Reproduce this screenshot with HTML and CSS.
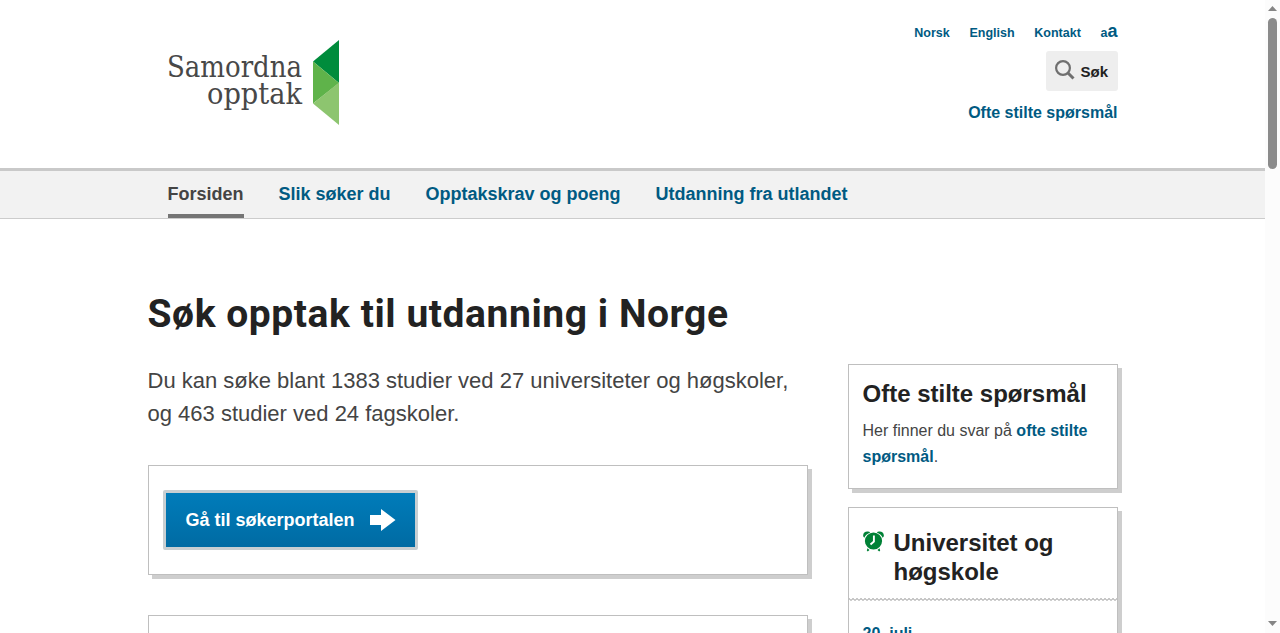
FILE: index.html
```html
<!DOCTYPE html>
<html lang="no">
<head>
    <meta charset="UTF-8">
    <meta name="viewport" content="width=device-width, initial-scale=1.0">
    <title>Samordna opptak</title>
    <link rel="stylesheet" href="styles.css">
</head>
<body>
    <div class="page">
        <!-- Header -->
        <header class="header">
            <div class="wrap header-inner">
                <a class="logo" href="#">
                    <svg width="174" height="88" viewBox="0 0 174 88">
                        <g class="logo-text">
                            <text x="-1" y="39" textLength="135" lengthAdjust="spacingAndGlyphs">Samordna</text>
                            <text x="39" y="66" textLength="95" lengthAdjust="spacingAndGlyphs">opptak</text>
                        </g>
                        <path d="M171 2v43L145 23.500z" fill="#008c3c"/>
                        <path d="M145 23.500L171 45 145 65.500z" fill="#5fb34a"/>
                        <path d="M171 44.500V87L145 65.500z" fill="#8dc56f"/>
                    </svg>
                </a>
                <div class="tools">
                    <div class="tool-links">
                        <a href="#">Norsk</a>
                        <a href="#">English</a>
                        <a href="#">Kontakt</a>
                        <a href="#">a<span class="big-a">a</span></a>
                    </div>
                    <button class="search">
                        <svg width="20" height="20" viewBox="0 0 20 20" fill="none" stroke="#6f6f6f">
                            <circle cx="8" cy="8" r="6.900" stroke-width="2.200"/>
                            <path d="M12.500 12.500l6 6" stroke-width="3"/>
                        </svg>
                        Søk
                    </button>
                    <a class="faq-link" href="#">Ofte stilte spørsmål</a>
                </div>
            </div>
        </header>

        <!-- Main menu -->
        <nav class="nav">
            <div class="wrap nav-inner">
                <a class="active" href="#">Forsiden</a>
                <a href="#">Slik søker du</a>
                <a href="#">Opptakskrav og poeng</a>
                <a href="#">Utdanning fra utlandet</a>
            </div>
        </nav>

        <!-- Content -->
        <main class="wrap">
            <h1>Søk opptak til utdanning i Norge</h1>
            <div class="columns">
                <div class="main-column">
                    <p class="intro">Du kan søke blant 1383 studier ved 27 universiteter og høgskoler, og 463 studier ved 24 fagskoler.</p>
                    <div class="box portal">
                        <a class="button" href="#">
                            Gå til søkerportalen
                            <svg width="26" height="22" viewBox="0 0 26 22" fill="#fff">
                                <path d="M0 6h11V0l14.500 11L11 22v-6H0z"/>
                            </svg>
                        </a>
                    </div>
                    <div class="box next-box"></div>
                </div>
                <aside class="side-column">
                    <div class="box faq">
                        <h2>Ofte stilte spørsmål</h2>
                        <p>Her finner du svar på <a href="#">ofte stilte spørsmål</a>.</p>
                    </div>
                    <div class="box dates">
                        <div class="dates-title">
                            <svg width="21" height="21" viewBox="0 0 21 21">
                                <g fill="#008136">
                                    <path d="M0.300 5.500C-.5 2.500 2 .2 5 .6c1 .1 1.700.5 2.200.9C4.500 2.500 2.400 4.300 1.300 6.700z"/>
                                    <path d="M20.700 5.500C21.500 2.500 19 .2 16 .6c-1 .1-1.700.5-2.200.9 2.700 1 4.800 2.800 5.900 5.200z"/>
                                    <circle cx="10.500" cy="10" r="8.600"/>
                                    <path d="M4.500 17.300l2 1.700-1.700 1.500-1-1zM16.500 17.300l-2 1.700 1.700 1.500 1-1z"/>
                                </g>
                                <path d="M10.900 4.500v6l-3.400 3" fill="none" stroke="#fff" stroke-width="1.900"/>
                            </svg>
                            <h2>Universitet og høgskole</h2>
                        </div>
                        <svg class="zigzag" width="268" height="3">
                            <defs>
                                <pattern id="zigzag" width="4" height="3" patternUnits="userSpaceOnUse">
                                    <path d="M-1 -.5l3 3 3-3" fill="none" stroke="#909090" stroke-width="1"/>
                                </pattern>
                            </defs>
                            <rect width="268" height="3" fill="url(#zigzag)"/>
                        </svg>
                        <a class="date" href="#">20. juli</a>
                    </div>
                </aside>
            </div>
        </main>
    </div>

    <!-- Scrollbar -->
    <div class="scrollbar">
        <svg width="9" height="5" viewBox="0 0 9 5"><path d="M0 5L4.500 0 9 5z" fill="#858585"/></svg>
        <div class="thumb"></div>
        <svg class="down" width="9" height="5" viewBox="0 0 9 5"><path d="M0 0h9L4.500 5z" fill="#858585"/></svg>
    </div>
</body>
</html>
```
FILE: styles.css
```css
* {
    box-sizing: border-box;
    margin: 0;
    padding: 0;
}
body {
    display: flex;
    height: 100vh;
    overflow: hidden;
    background-color: #fff;
    color: #444;
    font-family: "Liberation Sans", Arial, sans-serif;
    font-size: 16px;
}
a {
    color: #005a82;
    font-weight: bold;
    text-decoration: none;
}
.page {
    flex: 1;
    overflow: hidden;
}
.wrap {
    width: 970px;
    margin: 0 auto;
}
.header {
    height: 168px;
}
.header-inner {
    display: flex;
    justify-content: space-between;
    padding-left: 20px;
}
.logo {
    padding-top: 38px;
}
.logo svg {
    display: block;
}
.logo-text {
    fill: #484848;
    font-family: "DejaVu Serif Condensed", "DejaVu Serif", serif;
    font-size: 29px;
    font-weight: normal;
}
.tools {
    display: flex;
    flex-direction: column;
    align-items: flex-end;
    padding-top: 21px;
}
.tool-links {
    display: flex;
    align-items: baseline;
    gap: 19.7px;
    height: 30px;
    font-size: 12.5px;
    line-height: 20px;
}
.big-a {
    font-size: 18px;
}
.search {
    display: flex;
    align-items: center;
    gap: 6px;
    width: 72px;
    height: 40px;
    padding-left: 9px;
    border: none;
    border-radius: 3px;
    background-color: #eee;
    color: #222;
    font-family: inherit;
    font-size: 15px;
    font-weight: bold;
}
.search svg {
    margin-top: -2px;
}
.faq-link {
    margin-top: 12px;
    line-height: 20px;
}
.nav {
    height: 51px;
    border-top: 3px solid #c9c9c9;
    border-bottom: 1px solid #ccc;
    background-color: #f2f2f2;
}
.nav-inner {
    display: flex;
    gap: 35px;
    padding-left: 20px;
    font-size: 18px;
    line-height: 46px;
}
.nav-inner a {
    height: 47px;
}
.nav-inner .active {
    border-bottom: 4px solid #757575;
    color: #444;
}
h1 {
    padding-top: 70px;
    color: #222;
    font-family: Roboto, sans-serif;
    font-size: 39px;
    font-weight: bold;
    letter-spacing: 0.56px;
    line-height: 50px;
    white-space: nowrap;
}
h2 {
    color: #222;
    font-size: 24px;
    line-height: 29px;
}
.columns {
    display: flex;
    justify-content: space-between;
    padding-top: 25px;
}
.main-column {
    width: 660px;
}
.side-column {
    width: 270px;
}
.intro {
    height: 101px;
    font-size: 22px;
    line-height: 33px;
}
.box {
    border: 1px solid #bfbfbf;
    background-color: #fff;
    box-shadow: 4px 4px 0 #cecece;
}
.portal {
    height: 110px;
    padding: 24px 14px;
}
.button {
    display: flex;
    align-items: center;
    justify-content: space-between;
    width: 255px;
    height: 60px;
    padding: 0 19px 0 20px;
    border: 3px solid #c8cfd2;
    border-radius: 2px;
    background: linear-gradient(#007cba, #006ba3);
    color: #fff;
    font-size: 18px;
}
.next-box {
    height: 110px;
    margin-top: 40px;
}
.faq {
    height: 125px;
    padding: 14px;
}
.faq p {
    padding-top: 10px;
    line-height: 26px;
}
.dates {
    height: 220px;
    margin-top: 18px;
}
.dates-title {
    display: flex;
    gap: 10px;
    padding: 20px 14px 12px;
}
.dates-title svg {
    flex: none;
    margin-top: 3px;
}
.zigzag {
    display: block;
}
.date {
    display: block;
    padding: 21px 14px;
    line-height: 24px;
}
.scrollbar {
    display: flex;
    flex-direction: column;
    align-items: center;
    width: 15px;
    padding: 6px 0 7px;
    background-color: #fcfcfc;
}
.thumb {
    width: 9px;
    height: 151px;
    margin-top: 7px;
    border-radius: 5px;
    background-color: #8b8b8b;
}
.down {
    margin-top: auto;
}
```
